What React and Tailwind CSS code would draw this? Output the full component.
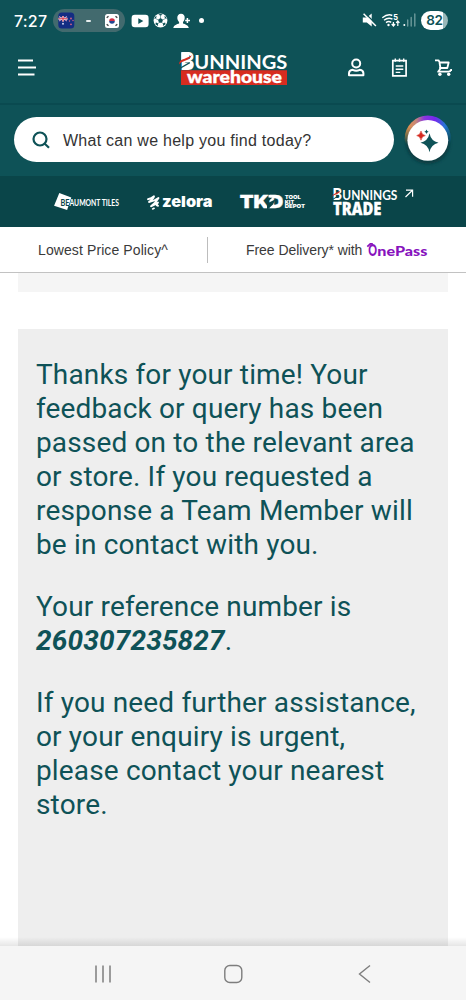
import React from "react";

const LATO = 'Lato, "Liberation Sans", sans-serif';
const INTER = 'Inter, "Liberation Sans", sans-serif';

function StatusBar() {
  return (
    <div className="flex h-[41px] items-center pl-[14px] pr-[18px] text-white">
      <span className="w-[34px] whitespace-nowrap font-[Inter,sans-serif] text-[16px] font-medium leading-none tracking-[0.2px]">7:27</span>
      <div className="ml-[5px] flex h-[23px] w-[72px] items-center rounded-full bg-[#426a6e] pl-[5px]">
        <svg width="17" height="17" viewBox="0 0 17 17">
          <rect x="0.3" y="0.5" width="16" height="16" rx="3.5" fill="#142d83" />
          <path d="M1 4.5 9 9M9 4.5 1 9" stroke="#d9a8c5" strokeWidth="1" />
          <path d="M5 4v5.5M.5 6.7h9" stroke="#fff" strokeWidth="2" />
          <path d="M5 4v5.5M.5 6.7h9" stroke="#cf3049" strokeWidth="1.1" />
          <g fill="#d96482"><circle cx="13" cy="6.5" r=".9" /><circle cx="15" cy="8.5" r=".7" /><circle cx="11.5" cy="9" r=".7" /><circle cx="13" cy="12.3" r=".9" /></g>
          <circle cx="5" cy="11.7" r="1" fill="#cbd3ee" />
        </svg>
        <span className="ml-[11px] h-[2px] w-[5px] rounded-full bg-[#e7eeee]" />
        <svg className="ml-[13px]" width="16" height="16" viewBox="0 0 16 16">
          <rect x="1" y="1" width="14" height="14" rx="2.5" fill="#fff" />
          <path d="M5.2 8a2.8 2.8 0 0 1 5.600 0z" fill="#d32e45" />
          <path d="M5.2 8a2.8 2.8 0 0 0 5.600 0z" fill="#24478f" />
          <path d="m2.700 4.800 1.800-1.600M11.500 3.200l1.800 1.600M2.700 11.200l1.800 1.600M11.500 12.800l1.800-1.600" stroke="#444" strokeWidth="1.300" />
        </svg>
      </div>
      <svg className="ml-[6px]" width="18" height="14" viewBox="0 0 18 14">
        <rect x=".6" y=".8" width="17" height="12.4" rx="3.2" fill="#fff" />
        <path d="m7.3 4.3 5 2.8-5 2.8z" fill="#0e5257" />
      </svg>
      <svg className="ml-[4px]" width="15" height="15" viewBox="0 0 15 15">
        <circle cx="7.5" cy="7.5" r="6.9" fill="#fff" />
        <g fill="#0e5257">
          <path d="m7.5 5 2.5 1.800-1 2.900H6L5 6.800z" />
          <path d="m5.3 1.600 2.200 1.100 2.200-1.100L7.5.9zM1.200 6l1.900-.8L3.600 2.800 2 4zM13.800 6l-1.900-.8-.5-2.400L13 4zM2.400 11.300l.5-1.900 2 .8.2 2.700zM12.600 11.300l-.5-1.900-2 .8-.2 2.700z" />
        </g>
        <path d="M7.5 5V2.600M10 6.800l2.200-1.200M9 9.700l1.400 1.300M6 9.700 4.600 11M5 6.800 2.800 5.600" stroke="#0e5257" strokeWidth=".5" />
      </svg>
      <svg className="ml-[5px]" width="18" height="16" viewBox="173 14 18 16">
        <path d="M181 14.800c2.500 0 3.900 1.600 3.700 4.200-.1 1.800-.8 3.100-1.700 4v1.500c2 .8 5.200 1.400 5.800 4.500h-15.500c.5-3.100 3.700-3.700 5.800-4.500V23c-.9-.9-1.700-2.200-1.800-4-.1-2.600 1.300-4.200 3.700-4.200z" fill="#fff" />
        <path d="M187.400 19v5M185.200 21.500h4.800" stroke="#fff" strokeWidth="1.500" />
      </svg>
      <span className="ml-[8px] h-[5px] w-[5px] rounded-full bg-white" />
      <div className="ml-auto flex items-center">
        <svg width="15" height="15" viewBox="362 14 15 15">
          <path d="M362.800 18.400h4l4.900-4v13.200l-4.900-4.200h-4z" fill="#fff" />
          <path d="M364.500 13.700 377 26" stroke="#0e5257" strokeWidth="1.300" />
          <path d="M363.600 14.700 375.900 27" stroke="#fff" strokeWidth="1.500" />
        </svg>
        <svg className="ml-[4px] overflow-visible" width="19" height="15" viewBox="381 14 19 15">
          <g fill="none" stroke="#fff" strokeWidth="1.400">
            <path d="M382.300 18.700q5.600-4.400 10-2.200M384 21.200q4.200-3.300 8.500-1.100M386 23.600q2.600-2 5.200-.2" />
            <path d="m391.700 25 1.700 2 1.700-2M393.400 23v4M396.200 23.900l1.600-2 1.600 2M397.800 22v5" strokeWidth="1.200" />
          </g>
          <circle cx="388.500" cy="26" r="1.200" fill="#fff" />
          <text x="393.300" y="20.800" fontFamily={INTER} fontSize="7.200" fontWeight="800" fill="#fff">5</text>
        </svg>
        <svg className="ml-[3px]" width="15" height="15" viewBox="403 14 15 15">
          <circle cx="404.300" cy="26" r="1" fill="#fff" />
          <path d="M407.700 27v-6M411.200 27v-8.500M414.800 27V15" stroke="#6c999b" strokeWidth="1.400" strokeLinecap="round" />
        </svg>
        <div className="ml-[3px] flex h-[19px] w-[27px] items-center justify-center rounded-full bg-[linear-gradient(90deg,#fff_82%,#9bb8b9_82%)] font-[Inter,sans-serif] text-[13.5px] font-semibold leading-none tracking-[-0.4px] text-[#0e5257]">82</div>
      </div>
    </div>
  );
}

function BunningsLogo() {
  return (
    <svg className="ml-[142px] overflow-visible" width="112" height="38" viewBox="178 48 112 38">
      <path d="M181 69.300h106V84H181z" fill="#d72c20" />
      <text x="180" y="69" fontFamily={LATO} fontSize="25" fontWeight="900" fill="#fff" textLength="14.500" lengthAdjust="spacingAndGlyphs">B</text>
      <path d="M181.200 51.200h8v5l-5 3.500h-3zM184 61.500h7v6h-7z" fill="#fff" />
      <path d="M179 63.400q.2-4.300 4-5.200 3-.8 8.800-4l-1.800 3q-3.500 2.400-8 3.700-1.600.6-3 2.500z" fill="#d72c20" />
      <path d="m180.500 67 9.300-5.300" stroke="#0e5257" strokeWidth="1.400" />
      <text x="194.300" y="68.200" fontFamily={LATO} fontSize="18.200" fontWeight="700" fill="#fff" textLength="93" lengthAdjust="spacingAndGlyphs">UNNINGS</text>
      <text x="187" y="82" fontFamily={LATO} fontSize="16.500" fontWeight="900" fill="#fff" stroke="#fff" strokeWidth=".35" textLength="95" lengthAdjust="spacingAndGlyphs">warehouse</text>
    </svg>
  );
}

function NavRow() {
  return (
    <div className="flex h-[53px] items-center pl-[17px]">
      <svg width="19" height="18" viewBox="17 59 19 18" stroke="#fff" strokeWidth="2">
        <path d="M18 60.500h15M18 67.500h18M18 74.500h16.500" />
      </svg>
      <BunningsLogo />
      <svg className="ml-[57px]" width="18" height="20" viewBox="347 58 18 20" fill="none" stroke="#fff" strokeWidth="2" strokeLinejoin="round">
        <circle cx="356.200" cy="63.500" r="4" />
        <path d="M349 75.200v-2q0-2.900 3.700-3.400 3.500 1.800 7 0 3.700.5 3.700 3.400v2z" />
      </svg>
      <svg className="ml-[26px]" width="17" height="20" viewBox="391 58 17 20" fill="none" stroke="#fff" strokeWidth="1.700">
        <path d="M392.800 60.600h13.300v15.300h-13.300z" />
        <path d="M395.300 58.500v3.200M399.500 58.500v3.200M403.700 58.500v3.200M395.700 66h7.600M395.700 69.200h7.600M395.700 72.400h4.600" strokeWidth="1.400" />
      </svg>
      <svg className="ml-[26px]" width="20" height="20" viewBox="434 57 20 20" fill="none" stroke="#fff" strokeWidth="1.800" strokeLinejoin="round">
        <path d="M435 59.300h3.500l1.300 2.200h8.900l-1.400 5.500h-8.200M439.500 61.500l1 6-2.400 3.200h10.200q2.200-.1 2.500-1.700h1.200" />
        <circle cx="439.900" cy="73.300" r="1.700" fill="#fff" stroke="none" />
        <circle cx="448.700" cy="73.300" r="1.700" fill="#fff" stroke="none" />
      </svg>
    </div>
  );
}

function SearchRow() {
  return (
    <div className="flex h-[73px] items-center border-t-2 border-[#0a4a50] pb-[2px] pl-[14px]">
      <div className="flex h-[45px] w-[380px] items-center rounded-full bg-white pl-[18px]">
        <svg width="18" height="18" viewBox="0 0 18 18" fill="none" stroke="#0e5257" strokeWidth="2.200">
          <circle cx="8" cy="8" r="6.500" />
          <path d="m12.500 12.500 4.500 4.200" />
        </svg>
        <span className="ml-[13px] mt-[3px] whitespace-nowrap font-['Liberation_Sans',sans-serif] text-[16px] leading-none tracking-[0.26px] text-[#333]">What can we help you find today?</span>
      </div>
      <svg className="ml-[8px]" width="52" height="54" viewBox="402 112 52 54">
        <defs>
          <linearGradient id="ring" x1="404" y1="0" x2="452" y2="0" gradientUnits="userSpaceOnUse">
            <stop offset="0.03" stopColor="#ed9440" />
            <stop offset="0.25" stopColor="#c5877a" />
            <stop offset="0.42" stopColor="#8b35dd" />
            <stop offset="0.65" stopColor="#7428ee" />
            <stop offset="0.85" stopColor="#2776d8" />
            <stop offset="1" stopColor="#126695" />
          </linearGradient>
          <linearGradient id="fade" x1="0" y1="114" x2="0" y2="143" gradientUnits="userSpaceOnUse">
            <stop offset="0.4" stopColor="#fff" />
            <stop offset="1" stopColor="#000" />
          </linearGradient>
          <mask id="top"><path d="M402 112h52v54h-52z" fill="url(#fade)" /></mask>
          <filter id="soft" x="-30%" y="-30%" width="160%" height="160%"><feGaussianBlur stdDeviation="1.600" /></filter>
        </defs>
        <circle cx="427.800" cy="141" r="22.300" fill="#083e43" filter="url(#soft)" />
        <circle cx="427.800" cy="137.800" r="23.200" fill="url(#ring)" mask="url(#top)" />
        <circle cx="427.800" cy="139.300" r="20.400" fill="#fff" />
        <path d="M429.500 132.200q1.400 7.800 9 9.500-7.600 1.700-9 9.500-1.400-7.800-9-9.500 7.600-1.700 9-9.500z" fill="#0e5257" />
        <path d="M421 130q.8 4 4.300 4.600-3.500.6-4.300 4.600-.8-4-4.300-4.600 3.500-.6 4.300-4.600z" fill="#d5291f" stroke="#d5291f" strokeWidth=".5" />
        <path d="M426.500 128.600q.4 1.800 2.200 2.200-1.800.4-2.200 2.200-.4-1.800-2.200-2.200 1.800-.4 2.200-2.200z" fill="#0e5257" />
      </svg>
    </div>
  );
}

function BrandStrip() {
  return (
    <div className="flex h-[51px] items-center bg-[#0a4549] pl-[53px]">
      <svg className="overflow-visible" width="67" height="20" viewBox="53 192 67 20">
        <path d="m59.300 193 12 4.500-4.200 12.600-13-4.300z" fill="#fff" />
        <text x="60.500" y="206" fontFamily={LATO} fontSize="8.800" fontWeight="700" fill="#0a4549" textLength="9" lengthAdjust="spacingAndGlyphs">BE</text>
        <text x="69.500" y="206" fontFamily={LATO} fontSize="8.800" fontWeight="700" fill="#fff" textLength="49.500" lengthAdjust="spacingAndGlyphs">AUMONT TILES</text>
      </svg>
      <svg className="ml-[25px] overflow-visible" width="68" height="18" viewBox="145 192 68 18">
        <path d="M148 198.300q3.500-.8 6-3-.5 2.500-5 5.700 5.500-.8 9.500-4-2.500 4.500-7.500 8.300 4-1.500 7-3.800-2.500 3.300 0 3.200" fill="none" stroke="#fff" strokeWidth="1.900" strokeLinecap="round" strokeLinejoin="round" />
        <path d="m152.600 208 1.500-.7" stroke="#fff" strokeWidth="1.600" strokeLinecap="round" />
        <text x="162" y="206.300" fontFamily={INTER} fontSize="15" fontWeight="900" fill="#fff" textLength="50.500" lengthAdjust="spacingAndGlyphs">zelora</text>
      </svg>
      <svg className="ml-[26px] overflow-visible" width="67" height="18" viewBox="239 193 67 18">
        <g fontFamily={INTER} fontWeight="900" fill="#fff">
          <text x="239.800" y="208.200" fontSize="18" stroke="#fff" strokeWidth=".4" textLength="43.500" lengthAdjust="spacingAndGlyphs">TKD</text>
          <path d="m267 202.500 5.500-5h-5.500zM267 203.500l8.500-4.300-2.500 5.300-5 4.500h-1z" fill="#0a4549" />
          <path d="M268.500 195h6v2.500h-6z" fill="#fff" />
          <text x="284.700" y="199" fontSize="5.300" textLength="16" lengthAdjust="spacingAndGlyphs">TOOL</text>
          <text x="284.700" y="203.700" fontSize="5.300" textLength="9.500" lengthAdjust="spacingAndGlyphs">KIT</text>
          <text x="284.700" y="208.400" fontSize="5.300" textLength="20.500" lengthAdjust="spacingAndGlyphs">DEPOT</text>
        </g>
      </svg>
      <svg className="ml-[25px] overflow-visible" width="84" height="32" viewBox="331 186 84 32">
        <text x="332.500" y="200" fontFamily={LATO} fontSize="16.500" fontWeight="900" fill="#fff" textLength="9.500" lengthAdjust="spacingAndGlyphs">B</text>
        <path d="M332 197q.5-3 3-3.500 2.500-1 5-2.800l-.6 1.700q-2 1.700-5 2.500-1.500.5-2.400 2.100z" fill="#d72c20" />
        <path d="m333 199.200 6-3.600" stroke="#0a4549" strokeWidth="1" />
        <text x="342.300" y="199.500" fontFamily={LATO} fontSize="12.400" fontWeight="700" fill="#fff" textLength="55" lengthAdjust="spacingAndGlyphs">UNNINGS</text>
        <text x="333" y="215.300" fontFamily={'"Open Sans", sans-serif'} fontSize="18.300" fontWeight="800" fill="#fff" stroke="#fff" strokeWidth=".3" textLength="48.500" lengthAdjust="spacingAndGlyphs">TRADE</text>
        <path d="M406 190.200h6.600v6.500M412.500 190.300l-7 6.700" fill="none" stroke="#fff" strokeWidth="1.200" />
      </svg>
    </div>
  );
}

function InfoBar() {
  return (
    <div className="flex h-[46px] items-center border-b border-[#c2c2c2] bg-white font-['Liberation_Sans',sans-serif] text-[14px] leading-none text-[#3a3a3a]">
      <span className="ml-[38px] w-[131px] whitespace-nowrap tracking-[0.1px]">Lowest Price Policy^</span>
      <span className="ml-[38px] h-[26px] w-px bg-[#bdbdbd]" />
      <span className="ml-[38px] w-[116px] whitespace-nowrap tracking-[-0.06px]">Free Delivery* with</span>
      <svg className="ml-[4px] overflow-visible" width="64" height="18" viewBox="366 241 64 18">
        <g fontFamily={LATO} fontWeight="900" fill="#8713bd">
          <text x="368.300" y="255.600" fontSize="17" textLength="8.800" lengthAdjust="spacingAndGlyphs">O</text>
          <text x="377.300" y="255.600" fontSize="13.400" textLength="50" lengthAdjust="spacingAndGlyphs">nePass</text>
        </g>
        <path d="m367.300 246.600 3-2.800h2.500" fill="none" stroke="#8713bd" strokeWidth="1.700" />
      </svg>
    </div>
  );
}

function SystemNav() {
  return (
    <div className="flex h-[54px] items-center bg-[#f5f5f5] pl-[94px] pt-px">
      <svg width="18" height="20" viewBox="0 0 18 20" stroke="#7d7d7d" strokeWidth="1.500">
        <path d="M2 1.500v17M9 1.500v17M16 1.500v17" />
      </svg>
      <svg className="ml-[111px]" width="20" height="20" viewBox="0 0 20 20" fill="none" stroke="#7d7d7d" strokeWidth="1.400">
        <rect x="1.800" y="1.500" width="17" height="17" rx="5" />
      </svg>
      <svg className="ml-[115px]" width="14" height="20" viewBox="0 0 14 20" fill="none" stroke="#7d7d7d" strokeWidth="1.400">
        <path d="M12 1.500 1.500 10 12 18.500" />
      </svg>
    </div>
  );
}

export default function App() {
  return (
    <div className="flex h-[1000px] w-[466px] flex-col overflow-hidden bg-white">
      <header className="bg-[#0e5257]">
        <StatusBar />
        <NavRow />
        <div className="h-[9px]" />
        <SearchRow />
        <BrandStrip />
      </header>
      <InfoBar />
      <main className="relative flex flex-1 flex-col px-[18px]">
        <div className="h-[19px] bg-[#f5f5f5]" />
        <div className="mt-[37px] flex flex-1 flex-col gap-[28px] whitespace-nowrap bg-[#eee] pl-[18px] pt-[29px] font-[Roboto,sans-serif] text-[28px] leading-[34px] tracking-[0.15px] text-[#0e5257]">
          <p>
            Thanks for your time! Your<br />feedback or query has been<br />passed on to the relevant area<br />or store. If you requested a<br />response a Team Member will<br />be in contact with you.
          </p>
          <p>
            Your reference number is<br /><strong className="font-bold italic">260307235827</strong>.
          </p>
          <p>
            If you need further assistance,<br />or your enquiry is urgent,<br />please contact your nearest<br />store.
          </p>
        </div>
        <div className="absolute bottom-0 left-0 h-[9px] w-full bg-gradient-to-b from-transparent to-black/10" />
      </main>
      <SystemNav />
    </div>
  );
}
